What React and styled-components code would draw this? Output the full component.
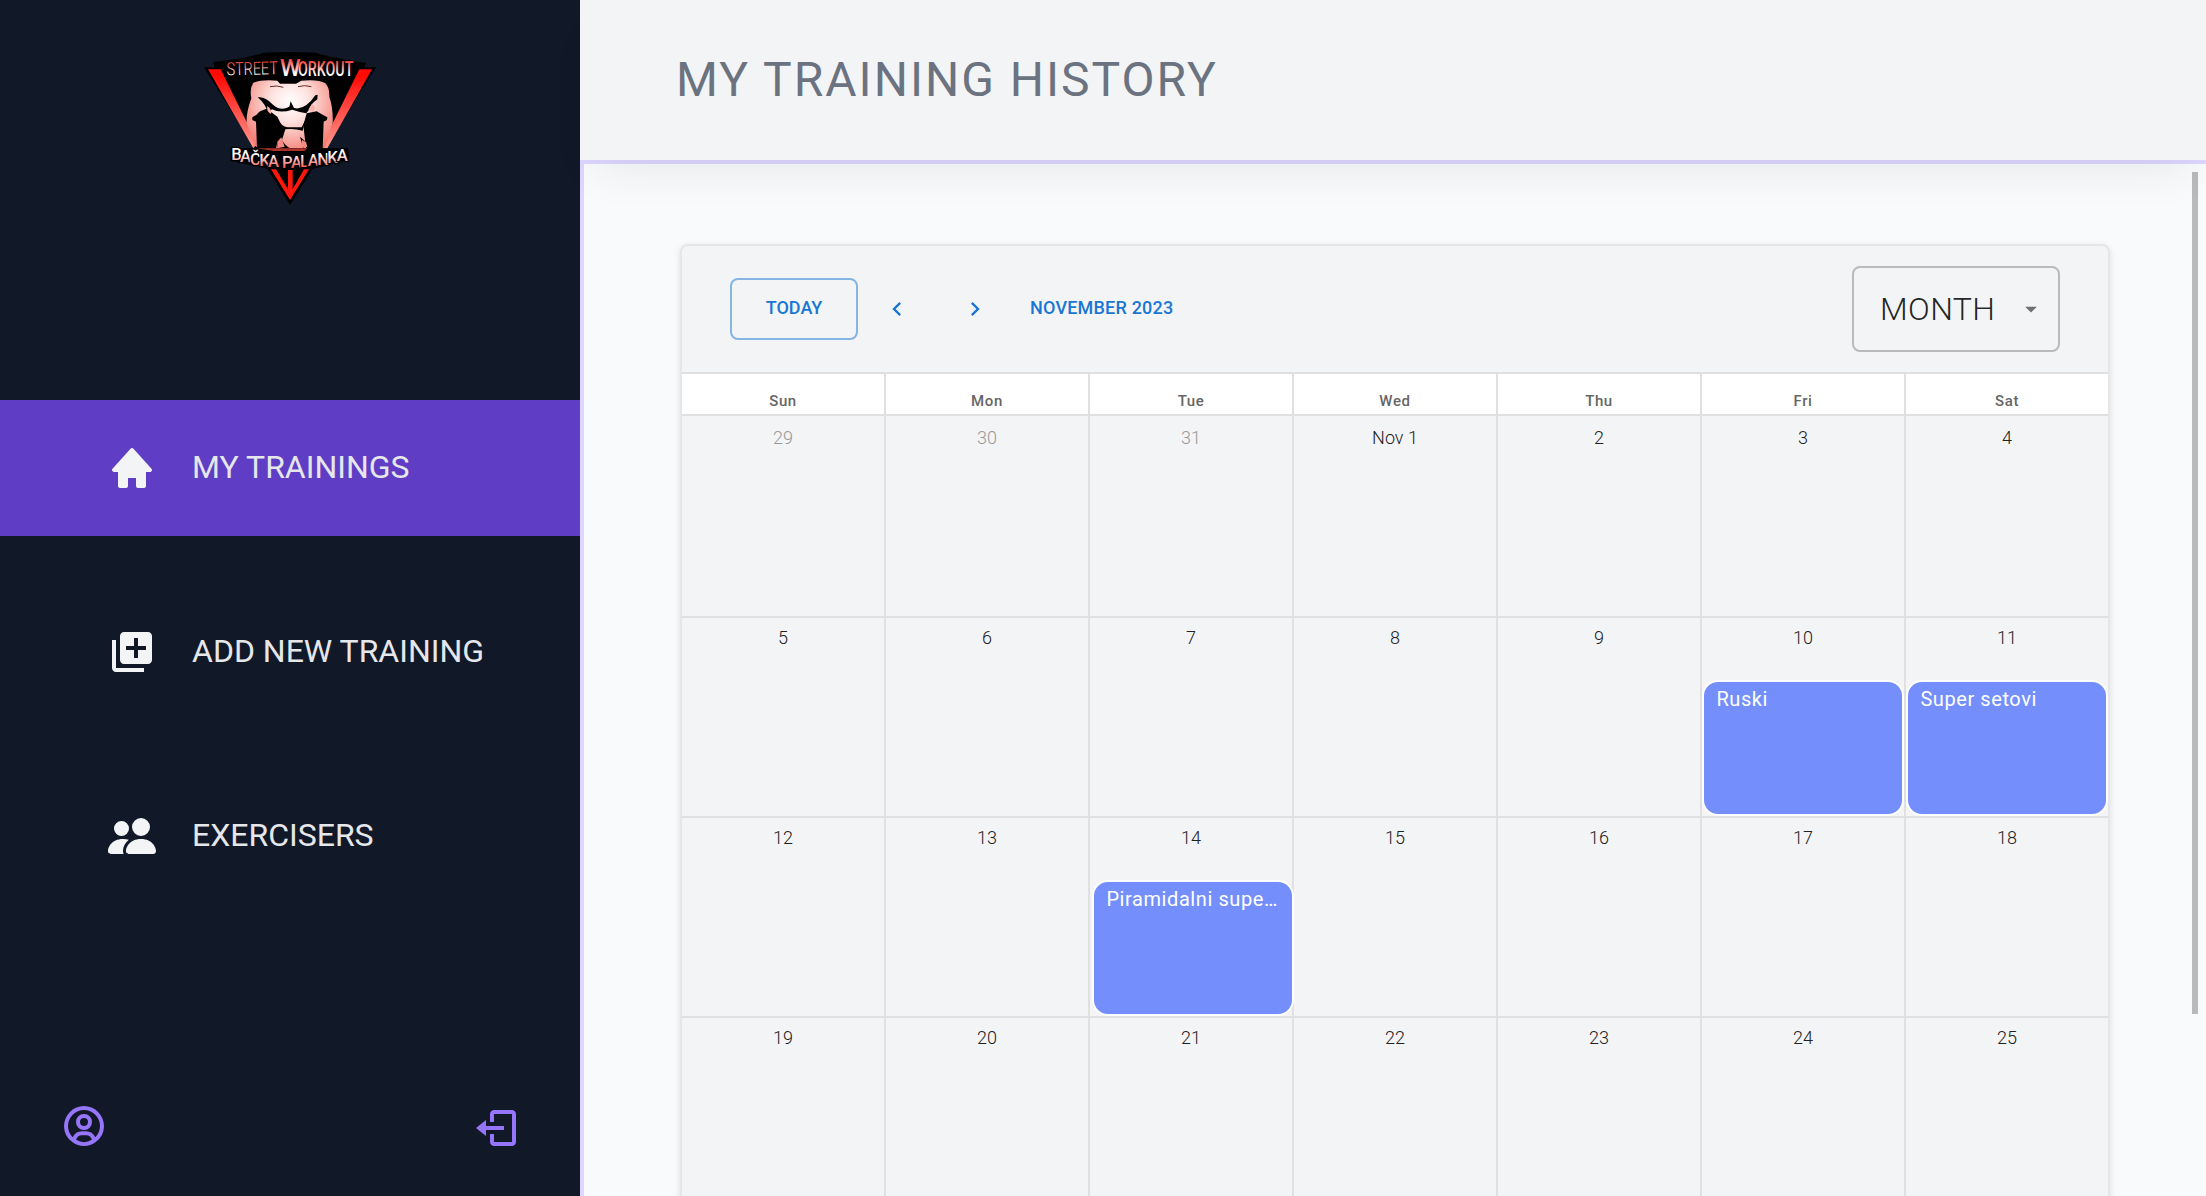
import React from "react";
import styled, { createGlobalStyle } from "styled-components";
import { BiSolidHome, BiUserCircle, BiLogOut } from "react-icons/bi";
import { BsPeopleFill } from "react-icons/bs";
import { MdAddToPhotos, MdChevronLeft, MdChevronRight, MdArrowDropDown } from "react-icons/md";

const GlobalStyle = createGlobalStyle`
  *, *::before, *::after { box-sizing: border-box; }
  body {
    margin: 0;
    overflow: hidden;
    font-family: Roboto, "Liberation Sans", sans-serif;
    background: #f9fafb;
  }
  svg { display: block; }
`;

const Shell = styled.div`
  display: grid;
  grid-template-columns: 580px 1fr;
  grid-template-rows: 1196px;
  height: 1196px;
  overflow: hidden;
`;

const Sidebar = styled.aside`
  display: flex;
  flex-direction: column;
  background: #111827;
`;

const LogoBox = styled.div`
  display: flex;
  justify-content: center;
  height: 400px;
  padding-top: 40px;
`;

const Nav = styled.nav`
  display: flex;
  flex-direction: column;
  gap: 48px;
`;

const NavItem = styled.a`
  display: flex;
  align-items: center;
  gap: 36px;
  height: 136px;
  padding-left: 108px;
  background: ${(p) => (p.$active ? "#5f3dc4" : "transparent")};
  color: #f3f4f6;
`;

const NavLabel = styled.span`
  padding-bottom: 2px;
  font-size: 32px;
  line-height: 48px;
  color: #e5e7eb;
`;

const SidebarFooter = styled.div`
  display: flex;
  justify-content: space-between;
  align-items: flex-end;
  margin-top: auto;
  padding: 0 60px 44px;
  color: #9775fa;
`;

const ProfileButton = styled.div`
  padding-bottom: 2px;
`;

const Content = styled.div`
  display: flex;
  flex-direction: column;
  min-width: 0;
`;

const Header = styled.header`
  display: flex;
  align-items: center;
  flex: 0 0 160px;
  padding: 0 96px;
  background: #f3f4f6;
  box-shadow: 0 24px 46px -14px rgba(0, 0, 0, 0.07);
  z-index: 1;
`;

const Title = styled.h1`
  margin: 0;
  font-size: 48px;
  line-height: 72px;
  font-weight: 400;
  letter-spacing: 2px;
  color: #6b7280;
`;

const Main = styled.main`
  position: relative;
  flex: 1;
  min-height: 0;
  padding: 80px 96px 0;
  border-top: 4px solid #ddd6fe;
  border-left: 4px solid #ddd6fe;
  background: #f9fafc;
  overflow: hidden;
`;

const ScrollThumb = styled.div`
  position: absolute;
  top: 8px;
  right: 8px;
  width: 6px;
  height: 842px;
  background: #bababa;
`;

const Card = styled.section`
  height: 1000px;
  border: 2px solid #e5e6e8;
  border-radius: 8px;
  background: #f3f4f6;
  box-shadow: 0 2px 6px rgba(0, 0, 0, 0.12);
  overflow: hidden;
`;

const Toolbar = styled.div`
  display: flex;
  align-items: center;
  height: 128px;
  padding: 0 48px;
  border-bottom: 2px solid #e0e0e0;
  color: #1976d2;
`;

const TodayButton = styled.button`
  width: 128px;
  height: 62px;
  margin: 0;
  padding: 0 0 3px;
  border: 2px solid rgba(25, 118, 210, 0.5);
  border-radius: 8px;
  background: transparent;
  color: inherit;
  font: 500 18px/30px Roboto, sans-serif;
`;

const ArrowButton = styled.span`
  margin-left: ${(p) => p.$gap}px;
`;

const Period = styled.span`
  margin-left: 41px;
  padding-bottom: 3px;
  font-size: 18px;
  line-height: 30px;
  font-weight: 500;
  letter-spacing: 0.2px;
`;

const ViewSelect = styled.div`
  display: flex;
  align-items: center;
  justify-content: space-between;
  width: 208px;
  height: 86px;
  margin-left: auto;
  padding: 0 13px 0 26px;
  border: 2px solid #b9babc;
  border-radius: 8px;
  font-size: 32px;
  font-weight: 360;
  letter-spacing: 0.4px;
  color: rgba(0, 0, 0, 0.87);
  svg { color: rgba(0, 0, 0, 0.54); }
`;

const Grid = styled.div`
  display: grid;
  grid-template-columns: repeat(6, 204px) 202px;
`;

const WeekDay = styled.div`
  height: 42px;
  padding-top: 17px;
  border-right: ${(p) => (p.$last ? 0 : 2)}px solid #e0e0e0;
  border-bottom: 2px solid #e0e0e0;
  background: #fff;
  font-size: 15px;
  line-height: 20px;
  font-weight: 500;
  letter-spacing: 0.6px;
  text-align: center;
  color: #666;
`;

const Day = styled.div`
  height: ${(p) => (p.$first ? 202 : 200)}px;
  padding-top: ${(p) => (p.$first ? 10 : 8)}px;
  border-right: ${(p) => (p.$last ? 0 : 2)}px solid #e0e0e0;
  border-bottom: 2px solid #e0e0e0;
`;

const DayNumber = styled.div`
  height: 24px;
  font-size: 18px;
  font-weight: 360;
  line-height: 24px;
  text-align: center;
  color: ${(p) => (p.$muted ? "#999" : "#212121")};
`;

const Event = styled.div`
  width: 202px;
  height: 136px;
  margin: 30px 0 0 ${(p) => p.$shift || 0}px;
  padding: 5px 0 5px 12.4px;
  border: 2px solid #fff;
  border-radius: 16px;
  background: #748ffc;
  color: #fff;
  font-size: 20px;
  font-weight: 430;
  line-height: 24px;
  letter-spacing: 0.58px;
  white-space: nowrap;
`;

const weekDays = ["Sun", "Mon", "Tue", "Wed", "Thu", "Fri", "Sat"];
const days = [
  "29", "30", "31", "Nov 1", "2", "3", "4",
  ...Array.from({ length: 21 }, (_, i) => String(i + 5)),
];
const events = {
  10: { title: "Ruski" },
  11: { title: "Super setovi" },
  14: { title: "Piramidalni supe…", shift: 2 },
};

function Logo() {
  return (
    <svg width="200" height="180" viewBox="0 0 600 540">
      <defs>
        <radialGradient id="skin" gradientUnits="userSpaceOnUse" cx="300" cy="185" r="165">
          <stop offset="0" stopColor="#fff" />
          <stop offset="0.35" stopColor="#fde3e0" />
          <stop offset="1" stopColor="#f5786e" />
        </radialGradient>
        <linearGradient id="frame" gradientUnits="userSpaceOnUse" x1="0" y1="85" x2="0" y2="330">
          <stop offset="0.1" stopColor="#ff0a05" />
          <stop offset="1" stopColor="#ff9d94" />
        </linearGradient>
        <linearGradient id="word" x1="0" y1="0" x2="0" y2="1">
          <stop offset="0.2" stopColor="#f3443c" />
          <stop offset="0.7" stopColor="#fff" />
        </linearGradient>
        <linearGradient id="town" x1="0" y1="0" x2="0" y2="1">
          <stop offset="0.35" stopColor="#fff" />
          <stop offset="0.85" stopColor="#f4574e" />
        </linearGradient>
      </defs>
      <path d="M42 82H74L70 66Q185 52 220 38Q300 34 378 38Q430 55 530 68L522 82H558L300 495Z" fill="#000" />
      <path d="M54 88H92L172 250L205 325H190ZM546 88H508L428 250L398 325H412Z" fill="url(#frame)" />
      <path d="M190 128Q215 118 262 122L270 131H318L334 122Q385 117 406 130Q419 142 418 170Q430 205 428 250L404 325H196L170 250Q168 218 184 175Q178 145 190 128Z" fill="url(#skin)" />
      <path d="M187 232L200 224Q206 212 230 206L262 230L274 254L258 325H201L198 245L187 240ZM412 232L398 224L380 214L350 220L340 256L348 325H398L401 245L411 240Z" fill="#000" />
      <path d="M203 172Q225 168 249 194Q272 215 298 200L302 184L312 204Q345 212 376 166L383 164L382 178Q360 194 358 208L349 220Q327 216 307 209Q270 221 246 208L233 220Q229 194 203 172Z" fill="#000" />
      <path d="M232 198Q246 207 243 222Q228 214 232 198ZM366 191L376 202L369 217L355 209Z" fill="#f9b3ad" />
      <path d="M262 238Q275 260 292 262H335L346 240L338 272Q310 264 286 268L274 306L261 325ZM274 298Q288 320 300 325H265ZM330 290L348 306L340 325Z" fill="#000" />
      <path d="M262 305L274 292L284 320L262 325ZM336 300L348 306L352 320L334 323Z" fill="#f58a82" />
      <path d="M240 140Q262 135 280 142M324 140Q344 134 364 140" fill="none" stroke="#6a2926" strokeWidth="3" />
      <path d="M122 324H190L196 318L204 325H474L478 359L352 390H250L122 362Z" fill="#000" />
      <path d="M200 325H352L343 333H252Z" fill="#ad302a" />
      <path d="M243 388L300 480L357 388H342L308 448V390H294V448L258 388Z" fill="#ff160f" />
      <g fontFamily="Roboto, sans-serif">
        <text x="110" y="106" fontSize="54" fontWeight="300" fill="url(#word)" textLength="154" lengthAdjust="spacingAndGlyphs" transform="rotate(-1.5 110 105)">STREET</text>
        <text x="270" y="108" fontSize="70" fontWeight="500" fill="url(#word)" textLength="62" lengthAdjust="spacingAndGlyphs">W</text>
        <text x="324" y="107" fontSize="62" fontWeight="500" fill="url(#word)" textLength="166" lengthAdjust="spacingAndGlyphs">ORKOUT</text>
        <text fontSize="50" fontWeight="500" fill="url(#town)" stroke="#000" strokeWidth="7" paintOrder="stroke" y="361 367 374 379 381 380 383 383 381 378 374 368 362" x="124 150 180 208 234 262 276 303 330 353 382 412 440">BAČKA PALANKA</text>
      </g>
    </svg>
  );
}

export default function App() {
  return (
    <>
      <GlobalStyle />
      <Shell>
        <Sidebar>
          <LogoBox><Logo /></LogoBox>
          <Nav>
            <NavItem $active><BiSolidHome size={48} /><NavLabel>MY TRAININGS</NavLabel></NavItem>
            <NavItem><MdAddToPhotos size={48} /><NavLabel>ADD NEW TRAINING</NavLabel></NavItem>
            <NavItem><BsPeopleFill size={48} /><NavLabel>EXERCISERS</NavLabel></NavItem>
          </Nav>
          <SidebarFooter>
            <ProfileButton><BiUserCircle size={48} /></ProfileButton>
            <BiLogOut size={48} />
          </SidebarFooter>
        </Sidebar>
        <Content>
          <Header><Title>MY TRAINING HISTORY</Title></Header>
          <Main>
            <Card>
              <Toolbar>
                <TodayButton>TODAY</TodayButton>
                <ArrowButton $gap={25}><MdChevronLeft size={28} /></ArrowButton>
                <ArrowButton $gap={50}><MdChevronRight size={28} /></ArrowButton>
                <Period>NOVEMBER 2023</Period>
                <ViewSelect>MONTH<MdArrowDropDown size={28} /></ViewSelect>
              </Toolbar>
              <Grid>
                {weekDays.map((name, i) => (
                  <WeekDay key={name} $last={i === 6}>{name}</WeekDay>
                ))}
                {days.map((day, i) => (
                  <Day key={i} $first={i < 7} $last={i % 7 === 6}>
                    <DayNumber $muted={i < 3}>{day}</DayNumber>
                    {events[day] && (
                      <Event $shift={events[day].shift}>{events[day].title}</Event>
                    )}
                  </Day>
                ))}
              </Grid>
            </Card>
            <ScrollThumb />
          </Main>
        </Content>
      </Shell>
    </>
  );
}
